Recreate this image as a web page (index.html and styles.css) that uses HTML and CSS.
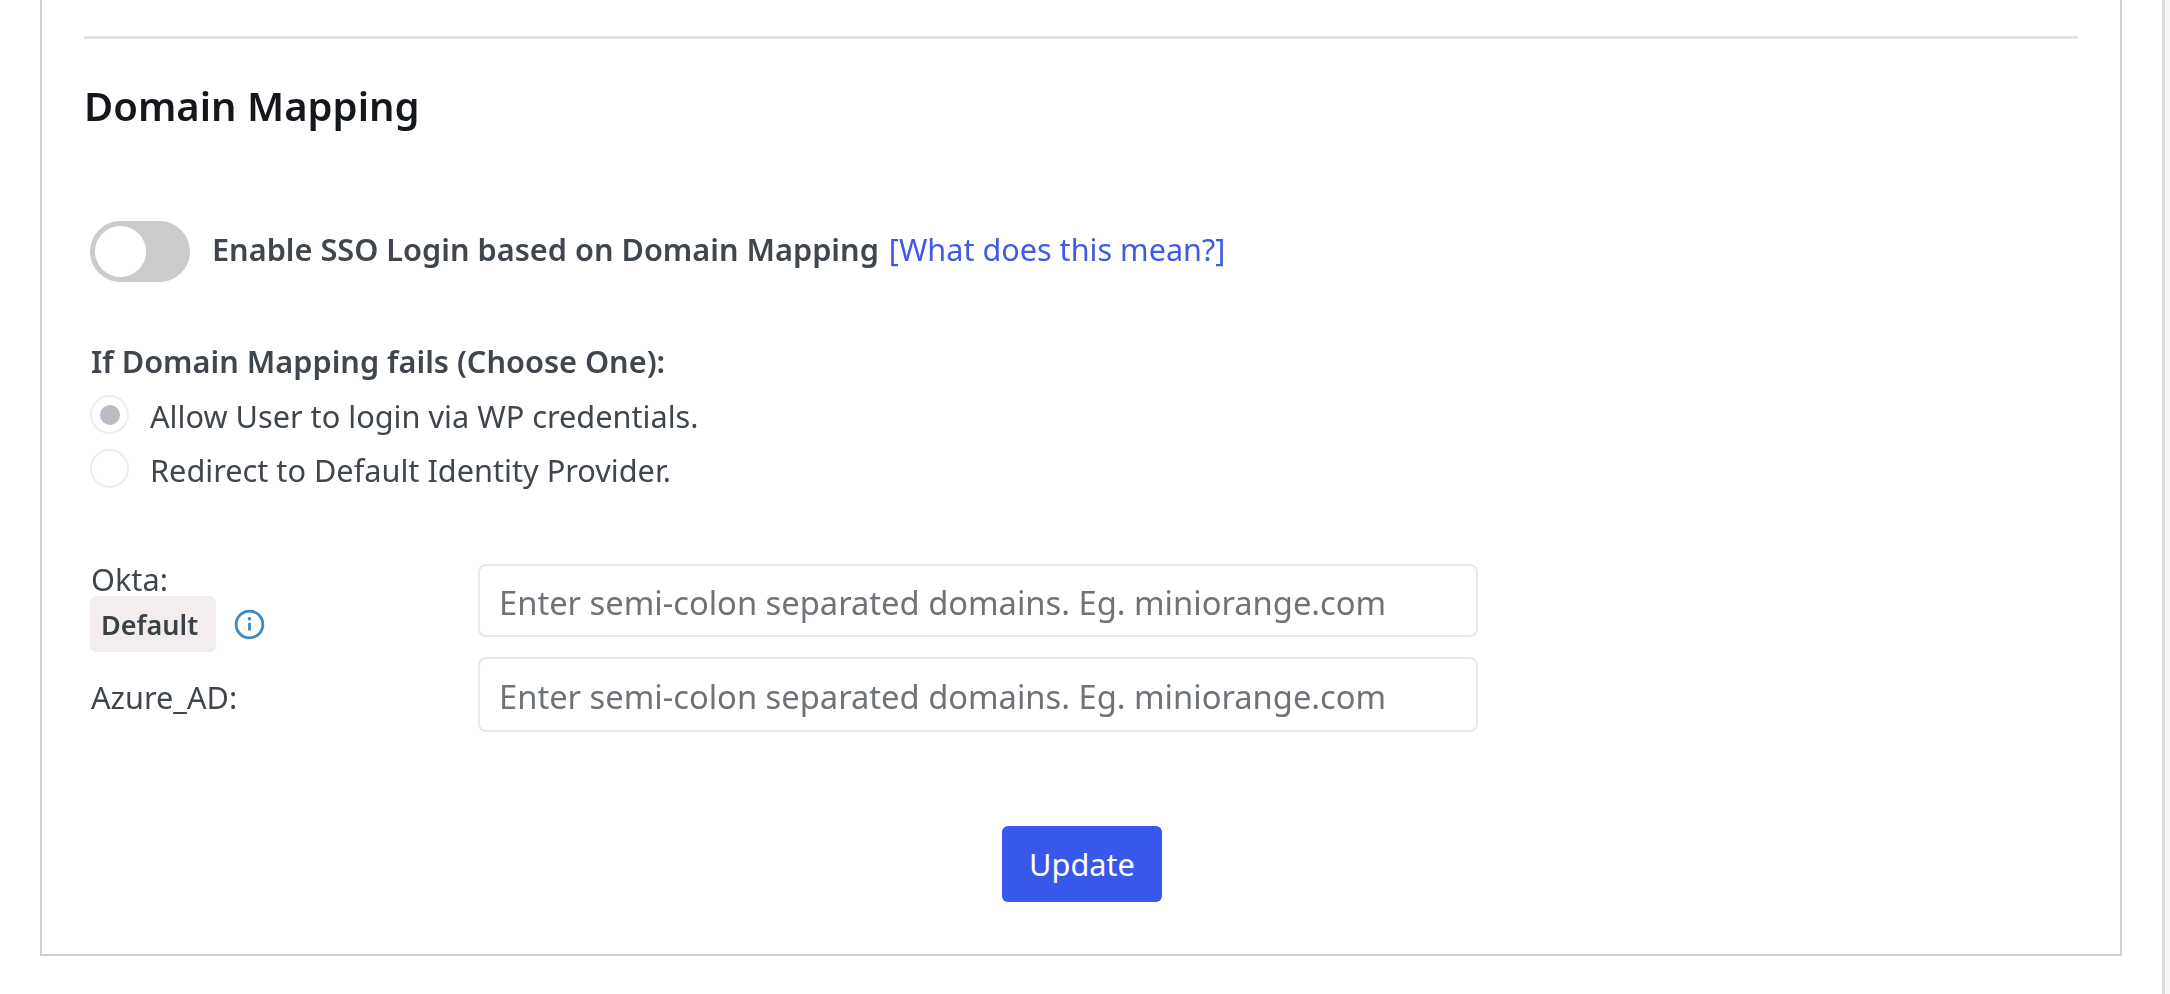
FILE: index.html
```html
<!DOCTYPE html>
<html lang="en">
<head>
<meta charset="utf-8">
<title>Domain Mapping</title>
<link rel="stylesheet" href="styles.css">
</head>
<body>
<div class="page">
  <main class="card">
    <hr class="rule">
    <h2 class="title">Domain Mapping</h2>
    <div class="sso-row">
      <span class="toggle"><span class="knob"></span></span>
      <span class="sso-label">Enable SSO Login based on Domain Mapping</span>
      <a class="help" href="#">[What does this mean?]</a>
    </div>
    <div class="fail-block">
      <div class="fail-title">If Domain Mapping fails (Choose One):</div>
      <label class="radio-row"><span class="radio checked"></span><span class="radio-text">Allow User to login via WP credentials.</span></label>
      <label class="radio-row second"><span class="radio"></span><span class="radio-text">Redirect to Default Identity Provider.</span></label>
    </div>
    <div class="map-grid">
      <div class="idp">
        <div class="idp-name">Okta:</div>
        <div class="default-line">
          <span class="badge">Default</span>
          <svg class="info" viewBox="0 0 29 29" aria-hidden="true"><circle cx="14.5" cy="14.5" r="12.5" fill="none" stroke="#3a8ac4" stroke-width="2.6"/><rect x="13.2" y="12.8" width="2.6" height="7.6" rx="1" fill="#3a8ac4"/><circle cx="14.5" cy="9.2" r="1.6" fill="#3a8ac4"/></svg>
        </div>
      </div>
      <input class="domain" type="text" placeholder="Enter semi-colon separated domains. Eg. miniorange.com">
      <div class="idp azure"><div class="idp-name">Azure_AD:</div></div>
      <input class="domain" type="text" placeholder="Enter semi-colon separated domains. Eg. miniorange.com">
    </div>
    <div class="actions"><button class="update" type="button">Update</button></div>
  </main>
  <div class="scroll-edge"></div>
</div>
</body>
</html>
```
FILE: styles.css
```css
* { box-sizing: border-box; }
html, body { margin: 0; height: 100%; background: #fff; overflow: hidden; }
body { font-family: "Noto Sans", "Open Sans", sans-serif; color: #40464e; font-size: 30.7px; }
.page { display: flex; height: 994px; filter: blur(0.45px); }
.card {
  width: 2082px; height: 956px; margin-left: 40px; padding: 36px 42px 0 42px;
  border: 2px solid #cfcfcf; border-top: 0; flex: none;
}
.rule { height: 3px; margin: 0; border: 0; background: #e4e4e4; }
.title { margin: 41px 0 0; font-size: 40px; line-height: 52px; font-weight: 600; color: #14181c; }
.sso-row { display: flex; align-items: center; margin-top: 89px; padding-left: 6px; height: 61px; }
.toggle { width: 100px; height: 61px; border-radius: 31px; background: #cbcbcb; padding: 5px; flex: none; }
.knob { display: block; width: 51px; height: 51px; border-radius: 50%; background: #fff; }
.sso-label { margin-left: 22px; margin-bottom: 6px; font-weight: 600; }
.help { margin-left: 10px; margin-bottom: 6px; color: #3f5ae6; text-decoration: none; font-size: 30.6px; }
.fail-block { margin-top: 60px; padding-left: 7px; }
.fail-title { font-weight: 600; line-height: 38px; }
.radio-row { display: flex; align-items: center; height: 39px; margin-top: 15px; }
.radio { width: 39px; height: 39px; border: 2px solid #eeeeee; border-radius: 50%; display: flex; align-items: center; justify-content: center; flex: none; margin-left: -1px; }
.radio.checked::before { content: ""; width: 20px; height: 20px; border-radius: 50%; background: #b9bcc3; }
.radio-text { margin-left: 21px; margin-top: 2px; }
.map-grid { display: grid; grid-template-columns: 388px 1000px; grid-template-rows: 73px 75px; margin-top: 76px; padding-left: 6px; row-gap: 20px; }
.idp-name { line-height: 30px; padding-left: 1px; }
.default-line { display: flex; align-items: center; margin-top: 2px; }
.badge { width: 126px; height: 56px; border-radius: 6px; background: #f3eded; display: flex; align-items: center; padding-left: 11px; font-weight: 600; color: #3a4047; font-size: 27px; }
.info { width: 31px; height: 31px; margin-left: 18px; }
.azure { display: flex; align-items: center; padding-top: 4px; }
.domain { width: 1000px; height: 100%; border: 2px solid #e8e8e8; border-radius: 8px; padding: 4px 20px 0 19px; font: inherit; font-size: 32.7px; background: #fff; outline: 0; }
.domain::placeholder { color: #6e7378; opacity: 1; }
.actions { display: flex; justify-content: center; margin-top: 94px; padding-left: 2px; }
.update { width: 160px; height: 76px; border: 0; border-radius: 6px; background: #3858e9; color: #fff; font: inherit; padding: 0; }
.scroll-edge { margin-left: 40px; width: 8px; height: 100%; border-left: 3px solid #dddddd; background: #f7f7f7; }
```
